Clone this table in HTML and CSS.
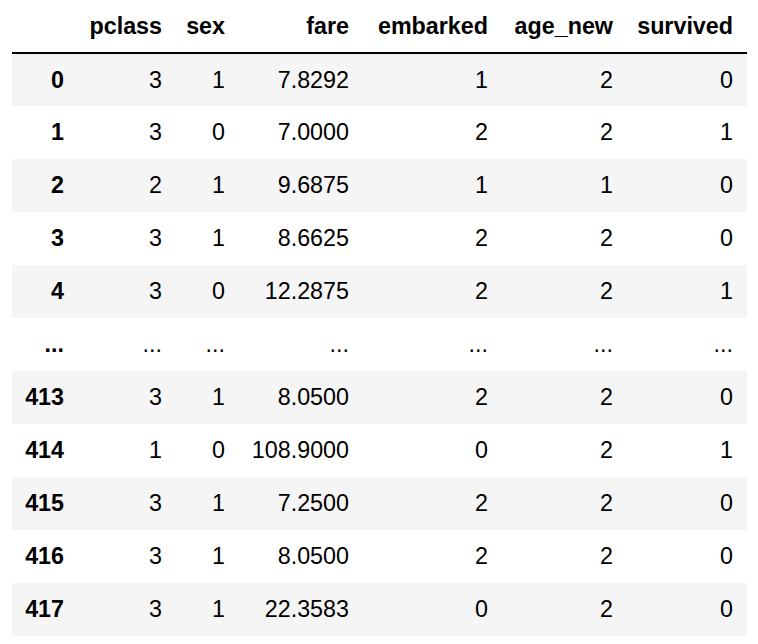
FILE: index.html
```html
<!DOCTYPE html>
<html>
<head>
<meta charset="utf-8">
<link rel="stylesheet" href="styles.css">
</head>
<body>
<table class="df">
  <thead>
    <tr><th class="c-idx"></th><th class="c-pclass">pclass</th><th class="c-sex">sex</th><th class="c-fare">fare</th><th class="c-emb">embarked</th><th class="c-age">age_new</th><th class="c-surv">survived</th></tr>
  </thead>
  <tbody>
    <tr><th>0</th><td>3</td><td>1</td><td>7.8292</td><td>1</td><td>2</td><td>0</td></tr>
    <tr><th>1</th><td>3</td><td>0</td><td>7.0000</td><td>2</td><td>2</td><td>1</td></tr>
    <tr><th>2</th><td>2</td><td>1</td><td>9.6875</td><td>1</td><td>1</td><td>0</td></tr>
    <tr><th>3</th><td>3</td><td>1</td><td>8.6625</td><td>2</td><td>2</td><td>0</td></tr>
    <tr><th>4</th><td>3</td><td>0</td><td>12.2875</td><td>2</td><td>2</td><td>1</td></tr>
    <tr><th>...</th><td>...</td><td>...</td><td>...</td><td>...</td><td>...</td><td>...</td></tr>
    <tr><th>413</th><td>3</td><td>1</td><td>8.0500</td><td>2</td><td>2</td><td>0</td></tr>
    <tr><th>414</th><td>1</td><td>0</td><td>108.9000</td><td>0</td><td>2</td><td>1</td></tr>
    <tr><th>415</th><td>3</td><td>1</td><td>7.2500</td><td>2</td><td>2</td><td>0</td></tr>
    <tr><th>416</th><td>3</td><td>1</td><td>8.0500</td><td>2</td><td>2</td><td>0</td></tr>
    <tr><th>417</th><td>3</td><td>1</td><td>22.3583</td><td>0</td><td>2</td><td>0</td></tr>
  </tbody>
</table>
</body>
</html>
```
FILE: styles.css
```css
html, body {
  margin: 0;
  padding: 0;
  background: #fff;
}

body {
  font-family: "Liberation Sans", Arial, Helvetica, sans-serif;
  font-size: 23.3px;
  color: #000;
}

.df {
  border-collapse: collapse;
  border-spacing: 0;
  margin-left: 12px;
  table-layout: fixed;
  width: 735px;
}

.df th,
.df td {
  box-sizing: border-box;
  text-align: right;
  padding: 0 12px;
  white-space: nowrap;
  vertical-align: middle;
  line-height: normal;
}

.df th {
  font-weight: bold;
}

.df thead th {
  height: 53px;
  border-bottom: 2px solid #000;
}

.df .c-idx { width: 64px; }
.df .c-pclass { width: 98px; }
.df .c-sex { width: 63px; }
.df .c-fare { width: 124px; }
.df .c-emb { width: 139px; }
.df .c-age { width: 125px; }
.df .c-surv { width: 122px; }

.df tr > :last-child {
  padding-right: 14px;
}

.df tbody th,
.df tbody td {
  height: 53px;
}

.df tbody tr:nth-child(odd) {
  background: #f5f5f5;
}
```
